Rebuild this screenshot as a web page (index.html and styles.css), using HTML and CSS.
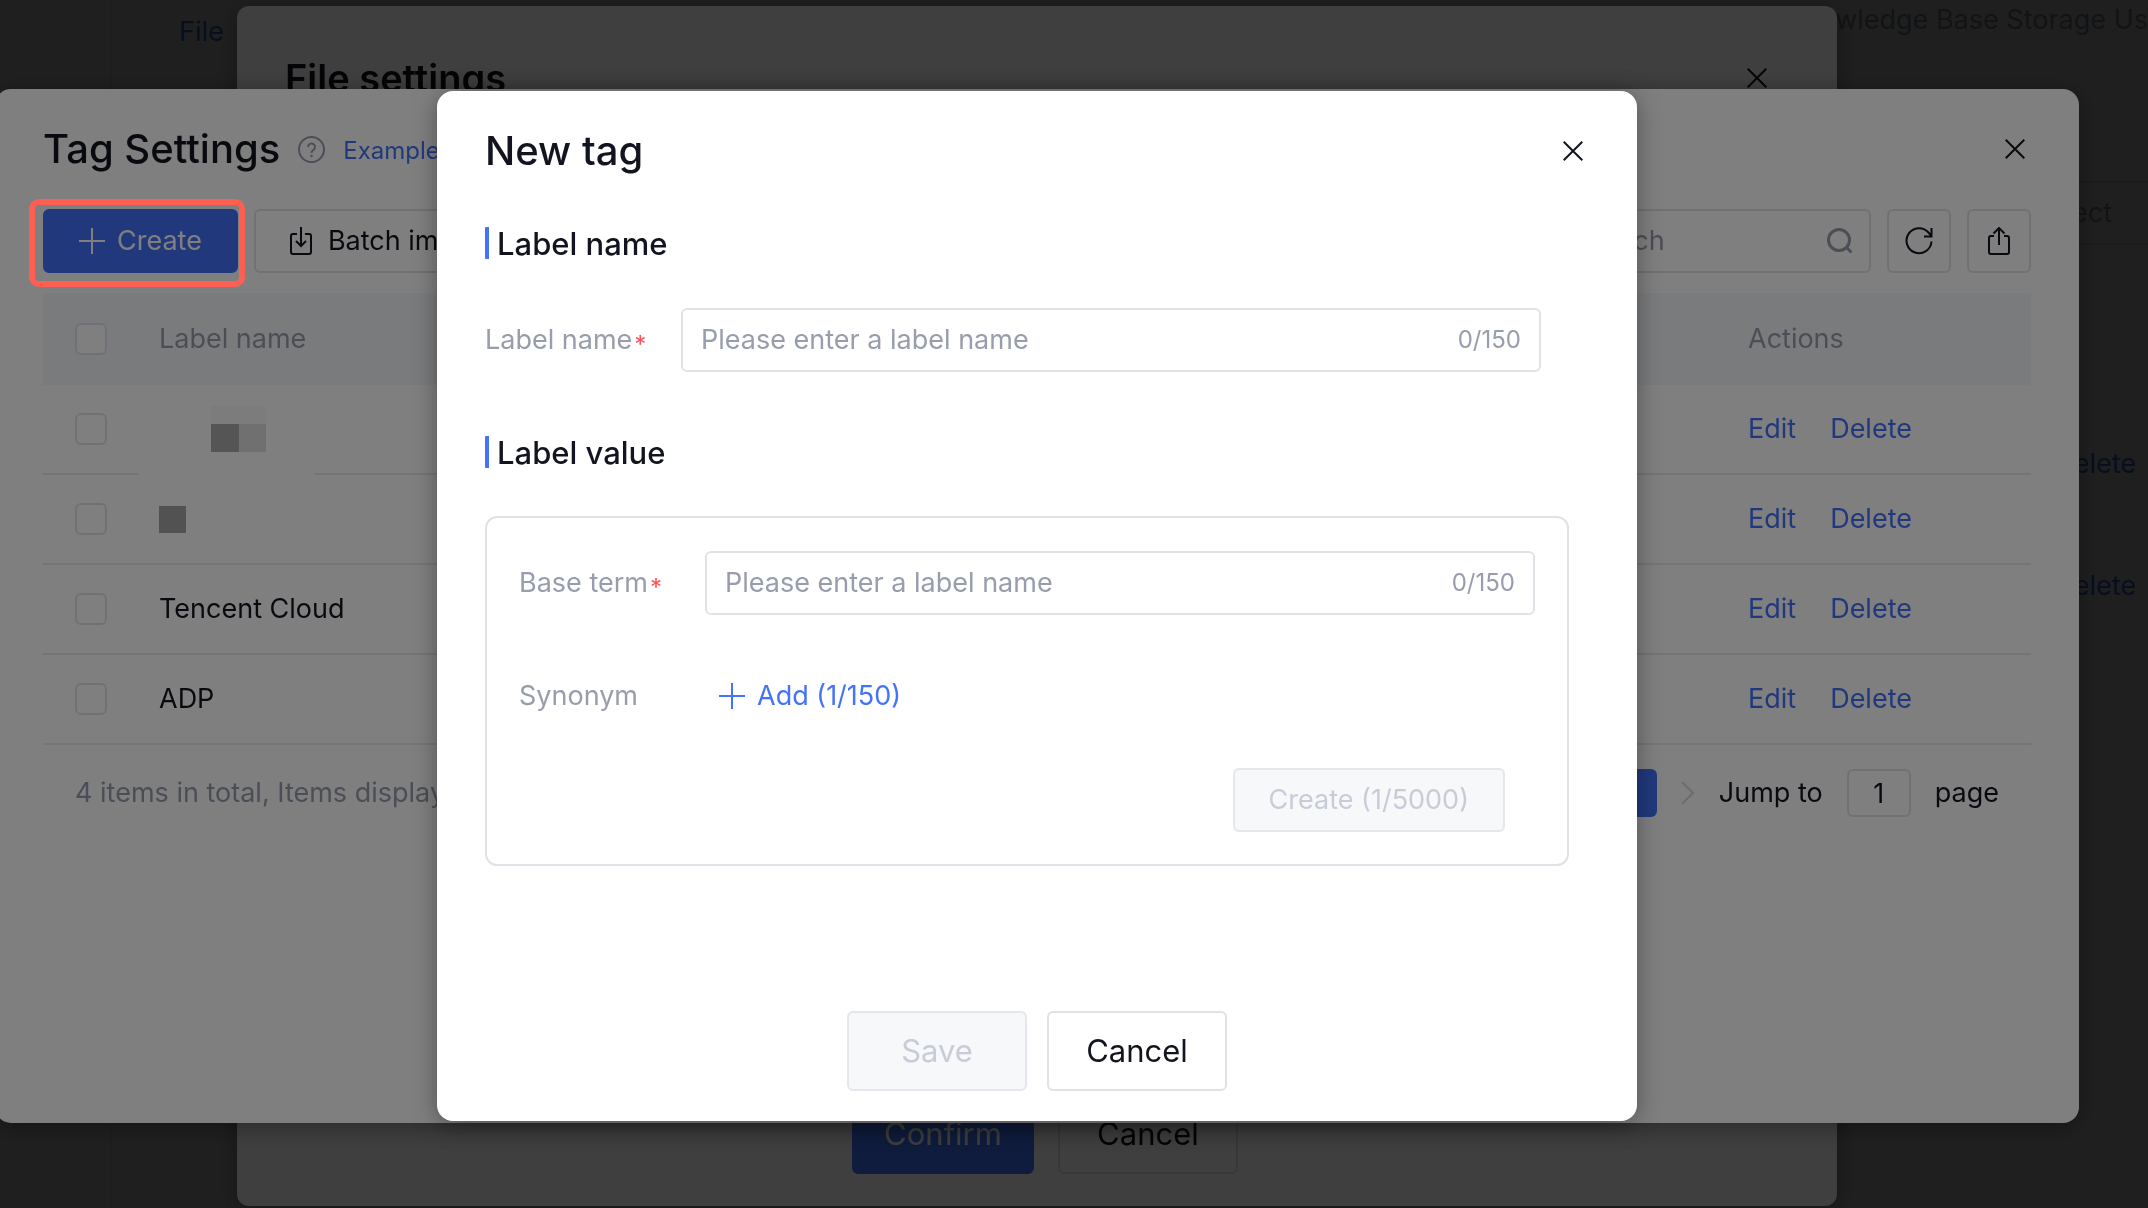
FILE: index.html
```html
<!DOCTYPE html>
<html lang="en">
<head>
  <meta charset="UTF-8">
  <meta name="viewport" content="width=device-width, initial-scale=1.0">
  <title>New tag</title>
  <link rel="stylesheet" href="styles.css">
</head>
<body>
  <!-- Knowledge base page -->
  <div class="page">
    <aside class="sidebar"></aside>
    <main class="content">
      <div class="page-top">
        <a class="link" href="#">File</a>
        <span class="muted">Knowledge Base Storage Us</span>
      </div>
      <div class="page-filter">
        <button class="filter-select" type="button">Select</button>
      </div>
      <div class="page-rows">
        <div class="page-row"><a class="link" href="#">Delete</a></div>
        <div class="page-row"><a class="link" href="#">Delete</a></div>
      </div>
    </main>
  </div>

  <!-- File settings -->
  <div class="mask">
    <section class="dialog dialog-file">
      <header class="dialog-header">
        <h2 class="dialog-title title-bold">File settings</h2>
        <button class="close" type="button" aria-label="Close">
          <svg width="20" height="20" viewBox="0 0 20 20"><path d="M0.7 0.7l18.6 18.6M19.3 0.7L0.7 19.3"/></svg>
        </button>
      </header>
      <footer class="dialog-footer">
        <button class="btn btn-large btn-primary" type="button">Confirm</button>
        <button class="btn btn-large" type="button">Cancel</button>
      </footer>
    </section>
  </div>

  <!-- Tag settings -->
  <div class="mask">
    <section class="dialog dialog-tags">
      <header class="dialog-header">
        <h2 class="dialog-title">Tag Settings</h2>
        <svg class="help" width="27" height="27" viewBox="0 0 27 27">
          <circle cx="13.5" cy="13.5" r="12.5"/>
          <path d="M10 11a3.5 3.5 0 1 1 5.6 2.8c-1.300 1-2.100 1.500-2.100 3.200"/>
          <circle class="help-dot" cx="13.500" cy="20" r="1.300"/>
        </svg>
        <a class="link link-small" href="#">Example</a>
        <button class="close" type="button" aria-label="Close">
          <svg width="20" height="20" viewBox="0 0 20 20"><path d="M0.7 0.7l18.6 18.6M19.3 0.7L0.7 19.3"/></svg>
        </button>
      </header>

      <div class="toolbar">
        <button class="btn btn-primary" type="button">
          <svg class="icon" width="26" height="26" viewBox="0 0 26 26"><path d="M13 0v26M0 13h26"/></svg>
          Create
        </button>
        <button class="btn btn-batch" type="button">
          <svg class="icon" width="22" height="28" viewBox="0 0 22 28"><path d="M7 7H3a2 2 0 0 0-2 2v16a2 2 0 0 0 2 2h16a2 2 0 0 0 2-2V9a2 2 0 0 0-2-2h-4M11 0v19M6 14l5 5 5-5"/></svg>
          Batch import
        </button>
        <div class="search">
          <input type="text" placeholder="Search" aria-label="Search">
          <svg class="icon-search" width="26" height="26" viewBox="0 0 26 26"><circle cx="12" cy="12" r="10.500"/><path d="M19 19l5.500 5.500"/></svg>
        </div>
        <button class="btn btn-icon" type="button" aria-label="Refresh">
          <svg class="icon" width="28" height="28" viewBox="0 0 28 28"><path d="M26.500 14.500A12.500 12.500 0 1 1 23.500 5.500L26.500 9M26.500 1v8.500H19"/></svg>
        </button>
        <button class="btn btn-icon" type="button" aria-label="Export">
          <svg class="icon" width="22" height="28" viewBox="0 0 22 28"><path d="M6 9H3a2 2 0 0 0-2 2v14a2 2 0 0 0 2 2h16a2 2 0 0 0 2-2V11a2 2 0 0 0-2-2h-3M11 18V1M5.500 6.500L11 1l5.500 5.500"/></svg>
        </button>
      </div>

      <table class="tag-table">
        <colgroup>
          <col class="col-check">
          <col>
          <col class="col-actions">
        </colgroup>
        <thead>
          <tr>
            <th><input type="checkbox" aria-label="Select all"></th>
            <th>Label name</th>
            <th>Actions</th>
          </tr>
        </thead>
        <tbody>
          <tr>
            <td><input type="checkbox" aria-label="Select row 1"></td>
            <td class="cell-redacted">
              <svg width="107" height="46" viewBox="0 0 107 46">
                <rect x="52" y="0" width="55" height="18" fill="#f8f8fb"/>
                <rect x="52" y="18" width="28" height="28" fill="#aaaaaa"/>
                <rect x="80" y="18" width="27" height="28" fill="#e0e0e0"/>
              </svg>
            </td>
            <td><a class="link" href="#">Edit</a><a class="link" href="#">Delete</a></td>
          </tr>
          <tr>
            <td><input type="checkbox" aria-label="Select row 2"></td>
            <td>
              <svg width="27" height="27" viewBox="0 0 27 27"><rect width="27" height="27" fill="#a4a4a7"/></svg>
            </td>
            <td><a class="link" href="#">Edit</a><a class="link" href="#">Delete</a></td>
          </tr>
          <tr>
            <td><input type="checkbox" aria-label="Select Tencent Cloud"></td>
            <td>Tencent Cloud</td>
            <td><a class="link" href="#">Edit</a><a class="link" href="#">Delete</a></td>
          </tr>
          <tr>
            <td><input type="checkbox" aria-label="Select ADP"></td>
            <td>ADP</td>
            <td><a class="link" href="#">Edit</a><a class="link" href="#">Delete</a></td>
          </tr>
        </tbody>
      </table>

      <div class="pagination">
        <span class="total">4 items in total, Items displayed per page</span>
        <button class="page-current" type="button">1</button>
        <svg class="next" width="14" height="24" viewBox="0 0 14 24"><path d="M1 1l11 11L1 23"/></svg>
        <label for="jump">Jump to</label>
        <input class="jump" id="jump" type="text" value="1">
        <span>page</span>
      </div>
    </section>
  </div>

  <!-- New tag -->
  <div class="mask">
    <div class="highlight"></div>
    <section class="dialog dialog-new">
      <header class="dialog-header">
        <h2 class="dialog-title">New tag</h2>
        <button class="close" type="button" aria-label="Close">
          <svg width="20" height="20" viewBox="0 0 20 20"><path d="M0.7 0.7l18.6 18.6M19.3 0.7L0.7 19.3"/></svg>
        </button>
      </header>

      <div class="dialog-body">
        <h3 class="section-title">Label name</h3>
        <div class="form-row form-row-name">
          <label for="labelName">Label name<span class="required">*</span></label>
          <div class="field">
            <input id="labelName" type="text" placeholder="Please enter a label name">
            <span class="count">0/150</span>
          </div>
        </div>

        <h3 class="section-title">Label value</h3>
        <div class="value-box">
          <div class="form-row">
            <label for="baseTerm">Base term<span class="required">*</span></label>
            <div class="field">
              <input id="baseTerm" type="text" placeholder="Please enter a label name">
              <span class="count">0/150</span>
            </div>
          </div>
          <div class="form-row form-row-synonym">
            <label for="addSynonym">Synonym</label>
            <button class="add" id="addSynonym" type="button">
              <svg class="icon" width="26" height="26" viewBox="0 0 26 26"><path d="M13 0v26M0 13h26"/></svg>
              Add (1/150)
            </button>
          </div>
          <div class="value-actions">
            <button class="btn" type="button" disabled>Create (1/5000)</button>
          </div>
        </div>
      </div>

      <footer class="dialog-footer">
        <button class="btn btn-large" type="button" disabled>Save</button>
        <button class="btn btn-large" type="button">Cancel</button>
      </footer>
    </section>
  </div>
</body>
</html>
```

FILE: styles.css
```css
/* General */
* {
  box-sizing: border-box;
}
body {
  margin: 0;
  height: 100vh;
  overflow: hidden;
  background-color: #fff;
  color: #12141f;
  font-family: Inter, "Liberation Sans", sans-serif;
  font-size: 27px;
  line-height: 40px;
}
button,
input {
  font: inherit;
  color: inherit;
}
button {
  cursor: pointer;
}
input::placeholder {
  color: #979dad;
  opacity: 1;
}
h2,
h3 {
  margin: 0;
}
.link {
  color: #4273f9;
  text-decoration: none;
}
.link-small {
  padding-top: 4px;
  font-size: 24px;
}
.muted {
  color: #979dad;
}

/* Page behind the dialogs */
.page {
  display: flex;
  height: 100vh;
}
.sidebar {
  width: 112px;
  border-right: 2px solid #ebedf2;
}
.content {
  flex: 1;
  min-width: 0;
}
.page-top {
  display: flex;
  justify-content: space-between;
  height: 181px;
  padding-left: 67px;
}
.page-top .link {
  padding-top: 12px;
}
.page-filter {
  display: flex;
  justify-content: flex-end;
}
.filter-select {
  width: 320px;
  height: 64px;
  margin-right: -48px;
  padding-right: 82px;
  border: 2px solid #e1e2e8;
  background: none;
  color: #979dad;
  text-align: right;
}
.page-rows {
  margin-top: 159px;
}
.page-row {
  height: 122px;
  padding-right: 12px;
  border-bottom: 2px solid #f0f1f4;
  line-height: 120px;
  text-align: right;
}

/* Dialogs */
.mask {
  position: fixed;
  inset: 0;
  display: flex;
  align-items: center;
  justify-content: center;
  padding: 4px 74px 0 0;
  background-color: rgba(0, 0, 0, 0.5);
}
.dialog {
  display: flex;
  flex-direction: column;
  padding: 32px 48px;
  border-radius: 16px;
  background-color: #fff;
  box-shadow: 0 4px 24px rgba(0, 0, 0, 0.36);
}
.dialog-file {
  width: 1600px;
  height: calc(100vh - 8px);
  padding: 44px 64px 32px 48px;
  border-radius: 12px;
}
.dialog-tags {
  flex: 1;
  height: calc(100vh - 174px);
  margin: 0 -5px;
}
.dialog-new {
  width: 1200px;
  height: calc(100vh - 178px);
  padding-bottom: 30px;
}
.dialog-header {
  display: flex;
  align-items: center;
  height: 56px;
}
.dialog-title {
  font-size: 40px;
  font-weight: 500;
  line-height: 56px;
}
.title-bold {
  font-size: 38px;
  font-weight: 600;
}
.close {
  display: flex;
  align-items: center;
  justify-content: center;
  width: 32px;
  height: 32px;
  margin-left: auto;
  padding: 0;
  border: none;
  background: none;
}
.close svg {
  fill: none;
  stroke: #12141f;
  stroke-width: 2;
}
.dialog-footer {
  display: flex;
  justify-content: center;
  gap: 20px;
  margin-top: auto;
}
.dialog-file .dialog-footer {
  gap: 24px;
  padding-left: 32px;
}

/* Buttons */
.btn {
  display: flex;
  align-items: center;
  justify-content: center;
  gap: 12px;
  height: 64px;
  padding: 0 34px;
  border: 2px solid #e1e2e8;
  border-radius: 6px;
  background-color: #fff;
  white-space: nowrap;
}
.btn-primary {
  border-color: #4273f9;
  background-color: #4273f9;
  color: #fff;
}
.btn-large {
  min-width: 180px;
  height: 80px;
  padding: 0 30px;
  font-size: 31px;
}
.btn-icon {
  width: 64px;
  padding: 0;
}
.btn:disabled {
  border-color: #e4e7ec;
  background-color: #f7f8fa;
  color: #c8ccd8;
  cursor: default;
}
.icon {
  fill: none;
  stroke: currentColor;
  stroke-width: 2;
}

/* Tag settings */
.help {
  margin: 0 18px;
  fill: none;
  stroke: #979dad;
  stroke-width: 2;
}
.help .help-dot {
  fill: #979dad;
  stroke: none;
}
.toolbar {
  display: flex;
  gap: 16px;
  margin-top: 32px;
}
.btn-batch {
  gap: 16px;
}
.search {
  display: flex;
  align-items: center;
  width: 320px;
  height: 64px;
  margin-left: auto;
  padding: 0 16px 0 22px;
  border: 2px solid #e1e2e8;
  border-radius: 6px;
}
.search input {
  flex: 1;
  min-width: 0;
  padding: 0;
  border: none;
  outline: none;
}
.icon-search {
  fill: none;
  stroke: #979dad;
  stroke-width: 3;
}
.tag-table {
  width: 100%;
  margin-top: 20px;
  border-collapse: separate;
  border-spacing: 0;
  table-layout: fixed;
}
.col-check {
  width: 96px;
}
.col-actions {
  width: 303px;
}
.tag-table th,
.tag-table td {
  height: 90px;
  padding: 0 20px;
  border-bottom: 2px solid #e9eaef;
  text-align: left;
}
.tag-table th {
  height: 92px;
  border-bottom: none;
  background-color: #f5f7fb;
  color: #979dad;
  font-weight: 400;
}
.tag-table th:first-child,
.tag-table td:first-child {
  padding: 0 0 0 32px;
}
.tag-table input {
  display: block;
  appearance: none;
  width: 32px;
  height: 32px;
  margin: 0;
  border: 2px solid #e1e2e8;
  border-radius: 6px;
  background-color: #fff;
}
.tag-table svg {
  display: block;
}
.tag-table .link + .link {
  margin-left: 34px;
}
.cell-redacted {
  position: relative;
}
.cell-redacted::after {
  content: "";
  position: absolute;
  left: 0;
  bottom: -2px;
  width: 176px;
  height: 2px;
  background-color: #fff;
}
.pagination {
  display: flex;
  align-items: center;
  gap: 24px;
  padding: 24px 32px 0;
}
.total {
  margin-right: auto;
  color: #979dad;
}
.page-current {
  width: 48px;
  height: 48px;
  padding: 0;
  border: none;
  border-radius: 6px;
  background-color: #4273f9;
  color: #fff;
}
.next {
  fill: none;
  stroke: #d6d9e0;
  stroke-width: 2;
}
.jump {
  width: 64px;
  height: 48px;
  padding: 0;
  border: 2px solid #e1e2e8;
  border-radius: 6px;
  text-align: center;
}

/* Red frame round the Create button */
.highlight {
  position: absolute;
  left: 29px;
  top: 199px;
  width: 216px;
  height: 88px;
  border: 6px solid #ff5f52;
  border-radius: 10px;
}

/* New tag form */
.dialog-body {
  padding: 48px 20px 0 0;
}
.section-title {
  height: 32px;
  margin-bottom: 48px;
  padding-left: 8px;
  border-left: 4px solid #4273f9;
  border-radius: 1px;
  font-size: 31px;
  font-weight: 500;
  line-height: 34px;
}
.form-row {
  display: flex;
  align-items: flex-end;
  height: 65px;
}
.form-row label {
  width: 186px;
  color: #979dad;
  line-height: 64px;
}
.form-row-name {
  margin-bottom: 64px;
  padding-right: 28px;
}
.form-row-name label {
  width: 196px;
}
.required {
  margin-left: 2px;
  color: #ff5257;
  font-size: 24px;
  line-height: 24px;
  vertical-align: -4px;
}
.field {
  display: flex;
  flex: 1;
  align-items: center;
  height: 64px;
  padding: 0 18px;
  border: 2px solid #e1e2e8;
  border-radius: 6px;
}
.field input {
  flex: 1;
  padding: 0;
  border: none;
  outline: none;
}
.count {
  color: #979dad;
  font-size: 24px;
}
.value-box {
  padding: 32px;
  border: 2px solid #e1e2e8;
  border-radius: 12px;
}
.form-row-synonym {
  margin: 48px 0 40px;
}
.add {
  display: flex;
  align-items: center;
  gap: 12px;
  height: 64px;
  padding: 0 14px;
  border: none;
  background: none;
  color: #4273f9;
}
.value-actions {
  display: flex;
  justify-content: flex-end;
  padding-right: 30px;
}
```
